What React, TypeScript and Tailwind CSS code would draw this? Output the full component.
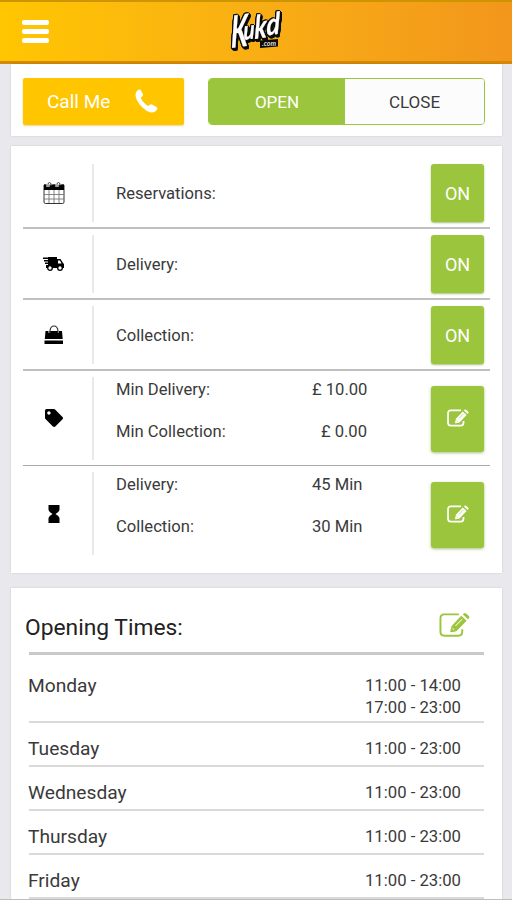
import React from "react";
import { FaTag } from "react-icons/fa";

interface Day {
  name: string;
  times: string[];
}

const days: Day[] = [
  { name: "Monday", times: ["11:00 - 14:00", "17:00 - 23:00"] },
  { name: "Tuesday", times: ["11:00 - 23:00"] },
  { name: "Wednesday", times: ["11:00 - 23:00"] },
  { name: "Thursday", times: ["11:00 - 23:00"] },
  { name: "Friday", times: ["11:00 - 23:00"] },
];

function Logo() {
  return (
    <svg width="56" height="48" viewBox="0 0 56 48" className="overflow-visible font-['Lato'] font-bold italic">
      <g fill="#fff" stroke="#fff" strokeWidth="0.3" className="[filter:drop-shadow(1px_1px_0_#0b0b0b)_drop-shadow(-1px_0_0_#0b0b0b)_drop-shadow(1px_1px_0_#0b0b0b)_drop-shadow(0_-1px_0_#0b0b0b)_drop-shadow(0_1px_0_#0b0b0b)]">
        <text transform="translate(3 40) rotate(-8) skewX(-8) scale(.6 1)" fontSize="44">K</text>
        <text transform="translate(15.500 32) rotate(-8) skewX(-8) scale(.8 1)" fontSize="26">u</text>
        <text transform="translate(26.500 31) rotate(-8) skewX(-8) scale(.78 1)" fontSize="32">k</text>
        <text transform="translate(38.500 27.500) rotate(-8) skewX(-8) scale(.84 1)" fontSize="30">d</text>
      </g>
      <path d="M32 32.500l18-1.500v7.500L32 40z" fill="#0b0b0b" />
      <text x="34" y="38" fontSize="8" fill="#ddd" textLength="14" lengthAdjust="spacingAndGlyphs">.com</text>
    </svg>
  );
}

function PhoneIcon({ className }: { className?: string }) {
  return (
    <svg viewBox="0 0 24 24" fill="currentColor" className={className}>
      <path d="M3.500 1.500Q5.500-.3 6.800 1.200l2 3.800q.8 1.800-1 2.800l-1 1q1.500 4.500 7.200 8.200l1.800-1.300q1-.8 2.200-.1l4.500 2.500q1.500 1.200.2 2.900-2 2.500-5 2.500Q12.500 23 6.500 16.500 1.500 10.500 1.500 5.500q0-2.300 2-4z" />
    </svg>
  );
}

function EditIcon({ className, wide }: { className?: string; wide?: boolean }) {
  return (
    <svg viewBox="0 0 32 26" fill="none" stroke="currentColor" className={className}>
      <path d="M20.500 2H5.500Q1.500 2 1.500 6v14q0 4 4 4H20q4 0 4-4V17.500" strokeWidth={wide ? 2.600 : 2} />
      <path d="M11.500 20.500l1.500-6.500L23 3.500l5.500 5L18.500 19q-1.500 1.200-7 1.500z" fill="currentColor" stroke="none" />
      <path d="M24.500 2l1-1q1.200-1 2.400 0l3 2.800q1 1.100 0 2.200l-1 1z" fill="currentColor" stroke="none" />
      <path d="M17 14L24 7M14 16.500l1.500 1.500" stroke={wide ? "#9bc53c" : "#fff"} strokeOpacity=".75" strokeWidth="1.100" />
    </svg>
  );
}

function CalendarIcon() {
  return (
    <svg width="22" height="24" viewBox="0 0 22 24" fill="none">
      <path d="M1 4h20v17q0 1.500-1.500 1.500h-17Q1 22.500 1 21z" fill="#fff" stroke="#333" />
      <path d="M1 3.500h20V9H1z" fill="#000" />
      <path d="M6 9v13M11 9v13M16 9v13M1 13.500h20M1 18h20" stroke="#777" strokeWidth=".9" />
      <path d="M5 6V3.500q0-2 1.500-2T8 3.500M14 6V3.500q0-2 1.500-2t1.500 2" stroke="#fff" strokeWidth="3" />
      <path d="M5 6V3.500q0-2 1.500-2T8 3.500V5M14 6V3.500q0-2 1.500-2t1.500 2V5" stroke="#444" />
    </svg>
  );
}

function TruckIcon() {
  return (
    <svg width="22" height="16" viewBox="0 0 22 16">
      <path d="M5 1h9v2h3.500L20 7l1 1v4H3V9h2V8H2V6.500h3v-1H1V4h4V3H0V1.500h5z" />
      <path d="M15 4.500h2l1.500 3H15z" fill="#fff" />
      <circle cx="7" cy="12" r="2.300" fill="#fff" stroke="#000" strokeWidth="1.300" />
      <circle cx="17" cy="12" r="2.300" fill="#fff" stroke="#000" strokeWidth="1.300" />
    </svg>
  );
}

function BagIcon() {
  return (
    <svg width="20" height="20" viewBox="0 0 20 20">
      <path d="M1.500 6h3v2h1V6H14v2h1V6h3l.7 8H.8z" />
      <path d="M.5 15.500h18.500V19H.5z" />
      <path d="M6 8V6q.5-5 4-5t4 5v2" fill="none" stroke="#333" strokeWidth="1.200" />
    </svg>
  );
}

function HourglassIcon() {
  return (
    <svg width="12" height="18" viewBox="0 0 12 18">
      <path d="M.5 0h11v5Q11 7 7.500 9q3.500 2 4 4v5H.5v-5q.5-2 4-4Q1 7 .5 5z" />
    </svg>
  );
}

function OnButton() {
  return (
    <button className="h-[58px] w-[53px] rounded-[3px] bg-[#9bc53c] pt-[2px] text-[18px] text-white shadow-[0_1px_2px_rgba(110,150,30,0.6)]">ON</button>
  );
}

function EditButton() {
  return (
    <button className="mt-[2px] flex h-[66px] w-[53px] items-center justify-center rounded-[3px] bg-[#9bc53c] pb-[2px] text-white shadow-[0_1px_3px_rgba(110,150,30,0.6)]">
      <EditIcon wide className="h-[18px] w-[22px]" />
    </button>
  );
}

function ServiceRow({ icon, label }: { icon: React.ReactNode; label: string }) {
  return (
    <div className="flex h-[71px] items-center border-b-2 border-[#c0c0c0] pr-[6px]">
      <div className="flex w-[69px] justify-center pr-[7px]">{icon}</div>
      <div className="h-[58px] w-[2px] bg-[#e9e9e9]" />
      <span className="ml-[22px] flex-1 pt-[4px] text-[16.600px]">{label}</span>
      <OnButton />
    </div>
  );
}

function ValueRow({ icon, items, last }: { icon: React.ReactNode; items: string[][]; last?: boolean }) {
  return (
    <div className={last ? "flex h-[95px] items-center pr-[6px]" : "flex h-[95px] items-center border-b border-[#a8a8a8] pr-[6px]"}>
      <div className="flex w-[69px] justify-center pr-[7px]">{icon}</div>
      <div className="h-[83px] w-[2px] bg-[#e9e9e9]" />
      <div className="ml-[22px] flex flex-1 flex-col gap-[18px] pb-[15px] text-[16.600px] leading-6">
        {items.map(([label, value]) => (
          <div key={label} className="flex">
            <span className="w-[196px]">{label}</span>
            <span className={last ? "w-[56px]" : "w-[55px] text-right whitespace-nowrap"}>{value}</span>
          </div>
        ))}
      </div>
      <EditButton />
    </div>
  );
}

export default function App() {
  return (
    <div className="h-[900px] overflow-hidden border-b border-[#bdbdbd] bg-[#e8e8ed] font-['Roboto',sans-serif] text-[#3a3a3a]">
      <header className="grid h-16 grid-cols-3 items-center border-t-2 border-b-3 border-t-[#cf9500] border-b-[#d48908] bg-linear-to-r from-[#ffc600] to-[#f2961c] px-[22px]">
        <div className="flex flex-col gap-1 pb-[1px]">
          <span className="h-[5px] w-[27px] rounded-[2px] bg-white" />
          <span className="h-[5px] w-[27px] rounded-[2px] bg-white" />
          <span className="h-[5px] w-[27px] rounded-[2px] bg-white" />
        </div>
        <div className="flex justify-center">
          <Logo />
        </div>
      </header>

      <main className="flex flex-col pr-[10px] pl-[11px]">
        <section className="flex h-[72px] gap-6 bg-white px-3 pt-[14px] shadow-[0_0_2px_rgba(0,0,0,0.12)]">
          <button className="flex h-[47px] w-[161px] items-center rounded-[2px] bg-[#ffc600] pl-6 text-[19px] text-white shadow-[0_1px_2px_rgba(200,150,0,0.4)]">
            <span className="pt-[2px]">Call Me</span>
            <PhoneIcon className="mb-[2px] ml-[24px] size-6" />
          </button>
          <div className="flex h-[47px] w-[277px] overflow-hidden rounded-[4px] border border-[#9bc53c] text-[17px]">
            <button className="w-[136px] bg-[#9bc53c] pt-[2px] text-white">OPEN</button>
            <button className="flex-1 bg-[#fcfcfc] pt-[2px]">CLOSE</button>
          </div>
        </section>

        <section className="mt-[10px] h-[427px] bg-white px-3 pt-[12px] shadow-[0_0_2px_rgba(0,0,0,0.12)]">
          <ServiceRow icon={<CalendarIcon />} label="Reservations:" />
          <ServiceRow icon={<TruckIcon />} label="Delivery:" />
          <ServiceRow icon={<BagIcon />} label="Collection:" />
          <ValueRow icon={<FaTag className="size-[18px] text-black" />} items={[["Min Delivery:", "£ 10.00"], ["Min Collection:", "£ 0.00"]]} />
          <ValueRow last icon={<HourglassIcon />} items={[["Delivery:", "45 Min"], ["Collection:", "30 Min"]]} />
        </section>

        <section className="mt-[15px] h-[320px] bg-white px-[18px] pt-6 shadow-[0_0_2px_rgba(0,0,0,0.12)]">
          <div className="flex h-[43px] items-start justify-between border-b-3 border-[#c9c9c9] pr-[14px]">
            <h2 className="-ml-[4px] pt-[1px] text-[22.800px] leading-[30px] text-[#222]">Opening Times:</h2>
            <EditIcon className="h-[26px] w-[31px] text-[#9bc53c]" />
          </div>
          {days.map((day) => (
            <div
              key={day.name}
              className={
                day.times.length > 1
                  ? "flex h-[68px] items-start justify-between border-b-2 border-[#dadada] pt-[19px] pr-[23px]"
                  : "flex h-[44px] items-start justify-between border-b-2 border-[#dadada] pt-[14px] pr-[23px]"
              }
            >
              <span className="-ml-[1px] text-[19.200px] leading-[24px]">{day.name}</span>
              <div className="pt-px text-[16.700px] leading-[22px] first-line:leading-[22px]">
                {day.times.map((time) => (
                  <p key={time}>{time}</p>
                ))}
              </div>
            </div>
          ))}
        </section>
      </main>
    </div>
  );
}
